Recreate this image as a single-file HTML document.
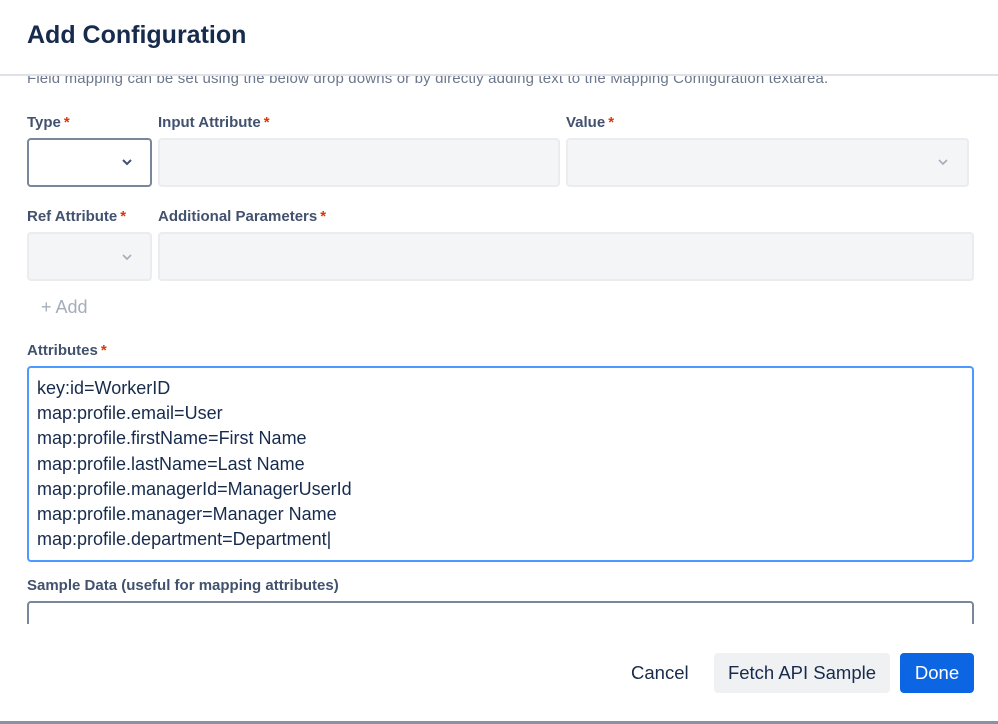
<!DOCTYPE html>
<html><head><style>
*{box-sizing:border-box;margin:0;padding:0}
body{width:998px;height:724px;background:#fff;font-family:"Liberation Sans",sans-serif;position:relative;overflow:hidden;color:#172b4d}
.a{position:absolute}
.lbl{font-size:15px;font-weight:bold;color:#42526e}
.lbl span{color:#de350b;margin-left:3px}
.dis{background:#f4f5f7;border:2px solid #ebecf0;border-radius:4px}
</style></head><body>
<div class="a" style="left:27px;top:70px;font-size:15px;color:#6b778c;white-space:nowrap;letter-spacing:0.15px">Field mapping can be set using the below drop downs or by directly adding text to the Mapping Configuration textarea.</div>
<div class="a" style="left:0;top:0;width:998px;height:74px;background:#fff"></div>
<div class="a" style="left:27px;top:21px;font-size:25px;font-weight:bold;color:#172b4d">Add Configuration</div>
<div class="a" style="left:0;top:74px;width:998px;height:2px;background:#dfe1e6"></div>

<div class="a lbl" style="left:27px;top:114px">Type<span>*</span></div>
<div class="a lbl" style="left:158px;top:114px">Input Attribute<span>*</span></div>
<div class="a lbl" style="left:566px;top:114px">Value<span>*</span></div>
<div class="a" style="left:27px;top:138px;width:125px;height:49px;border:2px solid #7a869a;border-radius:4px"></div>
<svg class="a" style="left:120px;top:156px" width="14" height="12"><path d="M3 4l4 4 4-4" stroke="#42526e" stroke-width="2" fill="none"/></svg>
<div class="a dis" style="left:158px;top:138px;width:402px;height:49px"></div>
<div class="a dis" style="left:566px;top:138px;width:403px;height:49px"></div>
<svg class="a" style="left:936px;top:156px" width="14" height="12"><path d="M3 4l4 4 4-4" stroke="#a5adba" stroke-width="1.6" fill="none"/></svg>

<div class="a lbl" style="left:27px;top:208px">Ref Attribute<span>*</span></div>
<div class="a lbl" style="left:158px;top:208px">Additional Parameters<span>*</span></div>
<div class="a dis" style="left:27px;top:232px;width:125px;height:49px"></div>
<svg class="a" style="left:120px;top:251px" width="14" height="12"><path d="M3 4l4 4 4-4" stroke="#a5adba" stroke-width="1.6" fill="none"/></svg>
<div class="a dis" style="left:158px;top:232px;width:816px;height:49px"></div>

<div class="a" style="left:41px;top:297px;font-size:18px;color:#a5adba">+ Add</div>

<div class="a lbl" style="left:27px;top:342px">Attributes<span>*</span></div>
<div class="a" style="left:27px;top:366px;width:947px;height:196px;border:2px solid #4c9aff;border-radius:4px;padding:8px 0 0 8px;font-size:18px;line-height:25.2px;color:#172b4d">
key:id=WorkerID<br>map:profile.email=User<br>map:profile.firstName=First Name<br>map:profile.lastName=Last Name<br>map:profile.managerId=ManagerUserId<br>map:profile.manager=Manager Name<br>map:profile.department=Department|
</div>

<div class="a lbl" style="left:27px;top:577px">Sample Data (useful for mapping attributes)</div>
<div class="a" style="left:27px;top:601px;width:947px;height:40px;border:2px solid #7a869a;border-radius:4px"></div>
<div class="a" style="left:0;top:624px;width:998px;height:98px;background:#fff"></div>

<div class="a" style="left:631px;top:662px;font-size:18.5px;color:#172b4d">Cancel</div>
<div class="a" style="left:714px;top:653px;width:176px;height:40px;background:#f0f1f3;border-radius:4px;font-size:18.5px;text-align:center;line-height:40px;color:#172b4d">Fetch API Sample</div>
<div class="a" style="left:900px;top:653px;width:74px;height:40px;background:#0c66e4;border-radius:4px;font-size:18.5px;text-align:center;line-height:40px;color:#fff">Done</div>
<div class="a" style="left:0;top:721px;width:998px;height:3px;background:#8993a4"></div>
</body></html>
